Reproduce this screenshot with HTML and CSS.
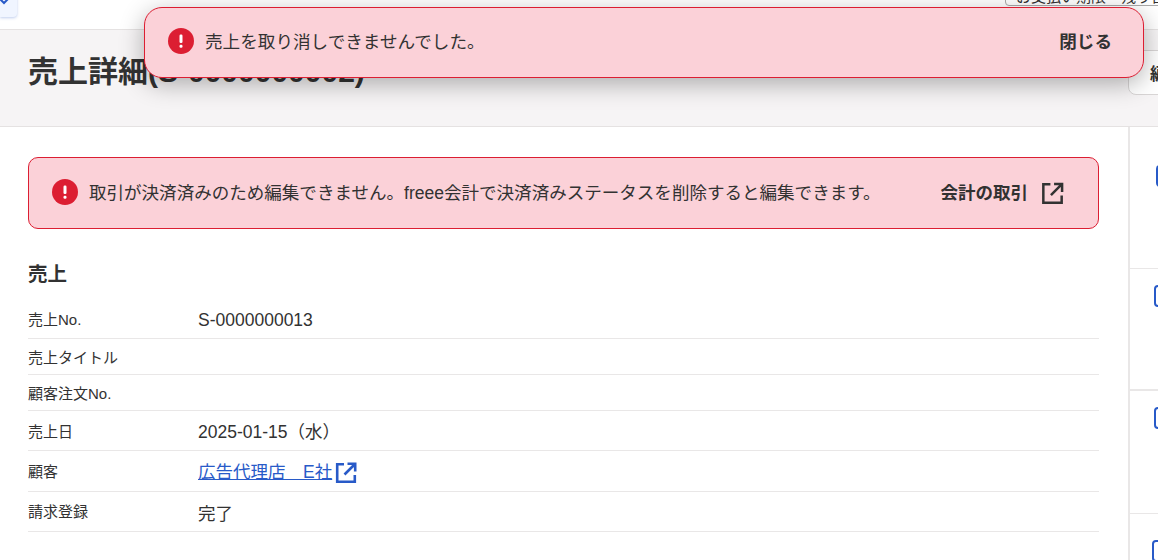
FILE: index.html
```html
<!DOCTYPE html>
<html lang="ja">
  <head>
    <meta charset="utf-8">
    <title>売上詳細</title>
    <link rel="stylesheet" href="styles.css">
  </head>
  <body>
    <div class="toast">
      <svg class="alert-icon" width="26" height="26" viewBox="0 0 26 26">
        <circle cx="13" cy="13" r="13" fill="#dc1e32" />
        <rect x="11.5" y="6.5" width="3" height="8.5" rx="1.2" fill="#fff" />
        <rect x="11.5" y="16.7" width="3" height="3" rx="1.2" fill="#fff" />
      </svg>
      <div class="toast-text">売上を取り消しできませんでした。</div>
      <a class="toast-close">閉じる</a>
    </div>

    <div class="topbar">
      <div class="back-button">
        <svg width="16" height="16" viewBox="0 0 16 16" fill="none">
          <path d="M-2 -3L4 3L10 -3" stroke="#285ac8" stroke-width="2" />
        </svg>
      </div>
      <div class="plan-box">お支払い期限・残り日数</div>
    </div>

    <header class="page-header">
      <h1>売上詳細(S-0000000002)</h1>
      <button class="header-button">編集</button>
    </header>

    <div class="columns">
      <main class="content">
        <div class="alert">
          <svg class="alert-icon" width="26" height="26" viewBox="0 0 26 26">
            <circle cx="13" cy="13" r="13" fill="#dc1e32" />
            <rect x="11.5" y="6.5" width="3" height="8.5" rx="1.2" fill="#fff" />
            <rect x="11.5" y="16.7" width="3" height="3" rx="1.2" fill="#fff" />
          </svg>
          <div class="alert-text">取引が決済済みのため編集できません。freee会計で決済済みステータスを削除すると編集できます。</div>
          <a class="alert-link">
            会計の取引
            <svg width="25" height="25" viewBox="0 0 24 24" fill="none" stroke="#323232" stroke-width="2.4">
              <path d="M10 3.2H3.2V20.8H20.8V14" />
              <path d="M10.5 13.5L20.5 3.5M13.5 2.8H21.2V10.5" />
            </svg>
          </a>
        </div>

        <h2>売上</h2>
        <dl class="details">
          <div class="row">
            <dt>売上No.</dt>
            <dd class="sales-no">S-0000000013</dd>
          </div>
          <div class="row row-empty">
            <dt>売上タイトル</dt>
            <dd></dd>
          </div>
          <div class="row row-empty">
            <dt>顧客注文No.</dt>
            <dd></dd>
          </div>
          <div class="row">
            <dt>売上日</dt>
            <dd>2025-01-15（水）</dd>
          </div>
          <div class="row row-customer">
            <dt>顧客</dt>
            <dd class="customer">
              <a href="#">広告代理店　E社</a>
              <svg width="24" height="24" viewBox="0 0 24 24" fill="none" stroke="#285ac8" stroke-width="2.6">
                <path d="M10 3.2H3.2V20.8H20.8V14" />
                <path d="M10.5 13.5L20.5 3.5M13.5 2.8H21.2V10.5" />
              </svg>
            </dd>
          </div>
          <div class="row">
            <dt>請求登録</dt>
            <dd class="status">完了</dd>
          </div>
        </dl>
      </main>

      <aside class="sidebar">
        <section class="side-item side-item-1"><div class="side-tile"></div></section>
        <section class="side-item side-item-2"><div class="side-tile"></div></section>
        <section class="side-item side-item-3"><div class="side-tile"></div></section>
        <section class="side-item side-item-4"><div class="side-tile"></div></section>
      </aside>
    </div>
  </body>
</html>
```

FILE: styles.css
```css
* {
  box-sizing: border-box;
}
html, body {
  height: 560px;
  overflow: hidden;
}
body {
  margin: 0;
  position: relative;
  background: #fff;
  color: #323232;
  font-family: "Liberation Sans", "Noto Sans CJK JP", sans-serif;
}

.toast {
  position: absolute;
  top: 7px;
  left: 144px;
  width: 1000px;
  height: 71px;
  display: flex;
  align-items: center;
  padding: 0 31px 3px 23px;
  background: #fbd1d8;
  border: 1px solid #dc1e32;
  border-radius: 18px;
  box-shadow: 0 6px 24px rgba(0, 0, 0, 0.3);
  z-index: 10;
}
.alert-icon {
  flex: none;
}
.toast-text {
  flex: 1;
  margin: 0 0 2px 11px;
  font-size: 17.6px;
}
.toast-close {
  margin-bottom: 2px;
  font-size: 17.6px;
  font-weight: bold;
}

.topbar {
  height: 30px;
  display: flex;
  justify-content: space-between;
  align-items: flex-end;
  overflow: hidden;
  border-bottom: 1px solid #e5e2e2;
}
.back-button {
  width: 17px;
  height: 30px;
  margin-bottom: 12px;
  padding-top: 13px;
  flex: none;
  background: #f0f5ff;
  border-radius: 0 0 4px 0;
  box-shadow: 0 1px 3px rgba(40, 90, 200, 0.3);
}
.back-button svg {
  display: block;
  overflow: visible;
}
.plan-box {
  width: 220px;
  height: 30px;
  margin-right: -67px;
  margin-bottom: 23px;
  padding: 8px 10px 0;
  font-size: 15px;
  flex: none;
  white-space: nowrap;
  border: 1px solid #aaa;
  border-radius: 4px;
}

.page-header {
  height: 97px;
  display: flex;
  justify-content: space-between;
  align-items: center;
  padding-left: 28px;
  background: #f6f4f5;
  border-bottom: 1px solid #e5e2e2;
}
h1 {
  margin: 0 0 12px;
  font-size: 30px;
  line-height: 40px;
  font-weight: bold;
}
.header-button {
  width: 90px;
  height: 45px;
  margin: 0 -60px 12px 0;
  padding: 0 0 0 21px;
  text-align: left;
  background: #fff;
  border: 1px solid #d9d6d6;
  border-radius: 8px;
  color: #323232;
  font: bold 17px "Liberation Sans", "Noto Sans CJK JP", sans-serif;
}

.columns {
  display: flex;
  height: 433px;
}
.content {
  width: 1130px;
  flex: none;
  padding: 30px 29px 0 28px;
  border-right: 2px solid #e9e7e7;
}

.alert {
  height: 72px;
  display: flex;
  align-items: center;
  padding: 0 33px 3px 23px;
  background: #fbd1d8;
  border: 1px solid #dc1e32;
  border-radius: 10px;
}
.alert-text {
  flex: 1;
  margin-left: 11px;
  font-size: 17.55px;
  white-space: nowrap;
}
.alert-link {
  display: flex;
  align-items: center;
  gap: 12px;
  margin-bottom: 1px;
  font-size: 17.5px;
  font-weight: bold;
  white-space: nowrap;
}
.alert-link svg {
  margin-top: 5px;
}

h2 {
  margin: 32px 0 12px;
  font-size: 19.5px;
  line-height: 26px;
  font-weight: bold;
}

.details {
  margin: 0;
}
.row {
  display: flex;
  align-items: center;
  height: 40px;
  border-bottom: 1px solid #e9e7e7;
}
.row-empty {
  height: 36px;
}
.row-customer {
  height: 41px;
}
dt {
  width: 170px;
  flex: none;
  font-size: 15px;
}
.row-customer dt {
  margin-bottom: 2px;
}
.row:last-child dt {
  margin-bottom: 2px;
}
dd {
  margin: 0;
  font-size: 17.5px;
}
.sales-no {
  padding-top: 3px;
}
.status {
  padding-top: 1px;
}
.customer {
  display: flex;
  align-items: center;
  gap: 2px;
}
.customer a {
  margin-bottom: 1px;
  color: #285ac8;
}
.customer svg {
  margin-top: 3px;
}

.sidebar {
  flex: 1;
  overflow: hidden;
}
.side-item {
  height: 122px;
  padding-top: 38px;
  border-bottom: 1px solid #e9e7e7;
}
.side-item-2 {
  height: 122px;
  padding: 16px 0 0 24px;
  border-bottom-width: 2px;
}
.side-item-3 {
  height: 123px;
  padding: 16px 0 0 24px;
}
.side-item-1 {
  height: 142px;
  padding-left: 26px;
}
.side-item-4 {
  padding: 26px 0 0 22px;
  border-bottom: 0;
}
.side-tile {
  width: 40px;
  height: 22px;
  border: 2px solid #285ac8;
  border-radius: 4px;
}
```
